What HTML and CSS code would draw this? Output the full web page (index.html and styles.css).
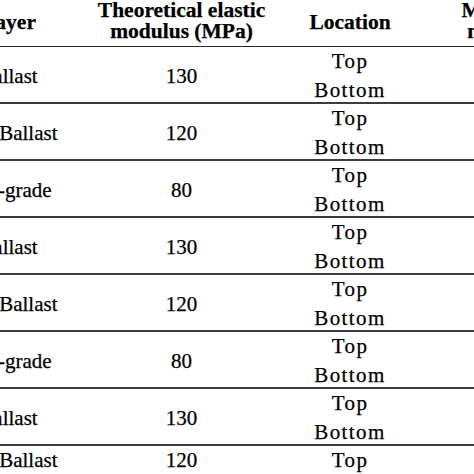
FILE: index.html
```html
<!DOCTYPE html>
<html>
<head>
<meta charset="utf-8">
<link rel="stylesheet" href="styles.css">
</head>
<body>
<div class="table">
  <div class="row head">
    <div class="cell">Layer</div>
    <div class="cell multi">Theoretical elastic<br>modulus (MPa)</div>
    <div class="cell">Location</div>
    <div class="cell multi">Measured elastic<br>modulus (MPa)</div>
  </div>
  <div class="row">
    <div class="cell">Ballast</div>
    <div class="cell">130</div>
    <div class="cell loc">Top<br>Bottom</div>
    <div class="cell"></div>
  </div>
  <div class="row">
    <div class="cell">Sub-Ballast</div>
    <div class="cell">120</div>
    <div class="cell loc">Top<br>Bottom</div>
    <div class="cell"></div>
  </div>
  <div class="row">
    <div class="cell">Sub-grade</div>
    <div class="cell">80</div>
    <div class="cell loc">Top<br>Bottom</div>
    <div class="cell"></div>
  </div>
  <div class="row">
    <div class="cell">Ballast</div>
    <div class="cell">130</div>
    <div class="cell loc">Top<br>Bottom</div>
    <div class="cell"></div>
  </div>
  <div class="row">
    <div class="cell">Sub-Ballast</div>
    <div class="cell">120</div>
    <div class="cell loc">Top<br>Bottom</div>
    <div class="cell"></div>
  </div>
  <div class="row">
    <div class="cell">Sub-grade</div>
    <div class="cell">80</div>
    <div class="cell loc">Top<br>Bottom</div>
    <div class="cell"></div>
  </div>
  <div class="row">
    <div class="cell">Ballast</div>
    <div class="cell">130</div>
    <div class="cell loc">Top<br>Bottom</div>
    <div class="cell"></div>
  </div>
  <div class="row last">
    <div class="cell">Sub-Ballast</div>
    <div class="cell">120</div>
    <div class="cell loc">Top<br>Bottom</div>
    <div class="cell"></div>
  </div>
</div>
</body>
</html>
```

FILE: styles.css
```css
html, body {
  margin: 0;
  padding: 0;
  background: #ffffff;
  overflow: hidden;
}

body {
  font-family: "Liberation Serif", "Times New Roman", serif;
  color: #000000;
  font-size: 21px;
}

.table {
  width: 723px;
  margin-left: -80px;
}

.row {
  display: grid;
  grid-template-columns: 177px 169px 168px 209px;
  align-items: center;
  box-sizing: border-box;
  height: 57px;
  padding-bottom: 2px;
  border-bottom: 2px solid #3c3c3c;
  line-height: 29px;
}

.cell {
  text-align: center;
  white-space: nowrap;
  -webkit-text-stroke: 0.25px #000000;
}

.head {
  height: 47px;
  padding-bottom: 4px;
  border-bottom: 1px solid #2a2a2a;
  font-weight: bold;
  font-size: 21.5px;
  line-height: 20.5px;
}

.head .multi {
  padding-bottom: 4px;
}

.loc {
  letter-spacing: 1.4px;
}

.last {
  height: 90px;
  align-items: start;
  padding-bottom: 0;
  border-bottom: none;
}
```
